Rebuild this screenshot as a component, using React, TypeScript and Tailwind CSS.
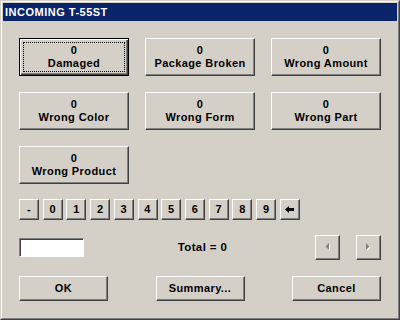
import type { ReactNode } from "react";

const RAISED =
  "border border-t-white border-l-white border-r-[#404040] border-b-[#404040] shadow-[inset_-1px_-1px_0_0_#808080]";
const FOCUSED =
  "border border-black shadow-[inset_1px_1px_0_0_#fff,inset_-1px_-1px_0_0_#404040,inset_-2px_-2px_0_0_#808080]";

type Motivo = { nome: string; qtd: number };

const motivos: Motivo[] = [
  { nome: "Damaged", qtd: 0 },
  { nome: "Package Broken", qtd: 0 },
  { nome: "Wrong Amount", qtd: 0 },
  { nome: "Wrong Color", qtd: 0 },
  { nome: "Wrong Form", qtd: 0 },
  { nome: "Wrong Part", qtd: 0 },
  { nome: "Wrong Product", qtd: 0 },
];

const teclas = ["-", "0", "1", "2", "3", "4", "5", "6", "7", "8", "9"];

function Botao({
  children,
  focado = false,
  className = "",
}: {
  children: ReactNode;
  focado?: boolean;
  className?: string;
}) {
  return (
    <button
      type="button"
      className={`relative flex items-center justify-center bg-[#d4d0c8] text-black ${focado ? FOCUSED : RAISED} ${className}`}
    >
      {focado && (
        <span className="pointer-events-none absolute inset-[3px] border border-dotted border-black" />
      )}
      {children}
    </button>
  );
}

// Seta desabilitada (cinza com sombra branca), estilo Win2000.
function SetaDesabilitada({ dir }: { dir: "esq" | "dir" }) {
  const pts = dir === "esq" ? "4,0 4,7 0.5,3.5" : "0,0 0,7 3.5,3.5";
  return (
    <svg width="6" height="9" viewBox="0 0 6 9">
      <polygon points={pts} transform="translate(1,1)" fill="#ffffff" />
      <polygon points={pts} fill="#808080" />
    </svg>
  );
}

export default function App() {
  return (
    <div className="h-[320px] w-[400px] border border-t-[#d4d0c8] border-l-[#d4d0c8] border-r-[#404040] border-b-[#404040] bg-[#d4d0c8] font-['Liberation_Sans',Arial,sans-serif] text-[11px] font-bold tracking-[0.4px]">
      <div className="flex h-full flex-col border border-t-white border-l-white border-r-[#808080] border-b-[#808080] p-px">
        <div className="flex h-[18px] items-center bg-[#0a246a] pl-[2px] text-white tracking-[0.5px]">
          INCOMING T-55ST
        </div>

        <div className="flex flex-col px-4 pt-[17px]">
          <div className="grid grid-cols-[110px_110px_110px] gap-4">
            {motivos.map((m, i) => (
              <Botao
                key={m.nome}
                focado={i === 0}
                className="h-[38px] w-[110px] flex-col leading-[13px]"
              >
                <span className="-mt-[1px]">{m.qtd}</span>
                <span>{m.nome}</span>
              </Botao>
            ))}
          </div>

          <div className="mt-[15px] flex w-[281px] justify-between">
            {teclas.map((t) => (
              <Botao key={t} className="h-[21px] w-[20px]">
                {t}
              </Botao>
            ))}
            <Botao className="h-[21px] w-[20px]">
              <svg width="9" height="7" viewBox="0 0 9 7">
                <polygon points="0,3.5 4,0 4,7" fill="#000" />
                <rect x="3.5" y="2" width="5.5" height="3" fill="#000" />
              </svg>
            </Botao>
          </div>

          <div className="mt-[15px] flex h-[25px] items-center">
            <div className="h-[19px] w-[65px] border border-t-[#808080] border-l-[#808080] border-r-white border-b-white bg-white shadow-[inset_1px_1px_0_0_#404040]" />
            <div className="flex-1 pl-[6px] text-center text-[11.5px]">Total = 0</div>
            <div className="flex gap-4">
              <Botao className="h-[25px] w-[25px]">
                <SetaDesabilitada dir="esq" />
              </Botao>
              <Botao className="h-[25px] w-[25px]">
                <SetaDesabilitada dir="dir" />
              </Botao>
            </div>
          </div>

          <div className="mt-4 flex justify-between">
            <Botao className="h-[25px] w-[89px]">OK</Botao>
            <Botao className="h-[25px] w-[89px]">Summary...</Botao>
            <Botao className="h-[25px] w-[89px]">Cancel</Botao>
          </div>
        </div>
      </div>
    </div>
  );
}
